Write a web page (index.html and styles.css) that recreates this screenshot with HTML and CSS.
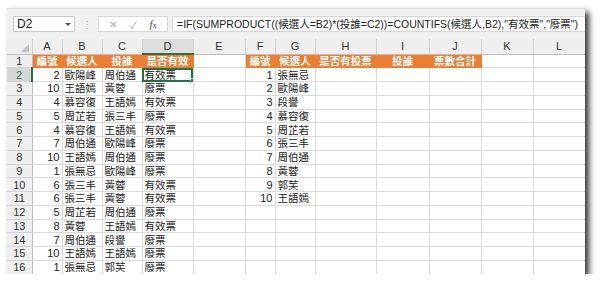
FILE: index.html
```html
<!DOCTYPE html>
<html lang="zh-Hant">
<head>
    <meta charset="UTF-8">
    <title>候選人投票</title>
    <link rel="stylesheet" href="styles.css">
</head>
<body>
    <div class="window">
        <div class="formula-bar">
            <div class="name-box">
                <span>D2</span>
                <span class="caret"></span>
            </div>
            <span class="dots">⋮</span>
            <div class="fx-buttons">
                <span class="btn">✕</span>
                <span class="btn">✓</span>
                <span class="btn fx"><i>f</i><sub>x</sub></span>
            </div>
            <div class="formula">=IF(SUMPRODUCT((候選人=B2)*(投誰=C2))=COUNTIFS(候選人,B2),"有效票","廢票")</div>
        </div>
        <table class="sheet">
            <colgroup>
                <col style="width:25px"><col style="width:30px"><col style="width:40px"><col style="width:40px">
                <col style="width:51px"><col style="width:52px"><col style="width:30px"><col style="width:40px">
                <col style="width:61px"><col style="width:53px"><col style="width:52px"><col style="width:52px">
                <col style="width:52px">
            </colgroup>
            <thead>
                <tr>
                    <th class="corner"><span class="tri"></span></th>
                    <th>A</th><th>B</th><th>C</th><th class="active-col">D</th><th>E</th><th>F</th>
                    <th>G</th><th>H</th><th>I</th><th>J</th><th>K</th><th>L</th>
                </tr>
            </thead>
            <tbody>
                <tr>
                    <th>1</th>
                    <td class="head">編號</td><td class="head">候選人</td><td class="head">投誰</td><td class="head">是否有效</td>
                    <td></td>
                    <td class="head">編號</td><td class="head">候選人</td><td class="head">是否有投票</td><td class="head">投誰</td><td class="head">票數合計</td>
                    <td></td><td></td>
                </tr>
                <tr>
                    <th class="active-row">2</th>
                    <td class="num">2</td><td>歐陽峰</td><td>周伯通</td><td class="selected">有效票</td><td></td>
                    <td class="num">1</td><td>張無忌</td><td></td><td></td><td></td><td></td><td></td>
                </tr>
                <tr>
                    <th>3</th>
                    <td class="num">10</td><td>王語嫣</td><td>黃蓉</td><td>廢票</td><td></td>
                    <td class="num">2</td><td>歐陽峰</td><td></td><td></td><td></td><td></td><td></td>
                </tr>
                <tr>
                    <th>4</th>
                    <td class="num">4</td><td>慕容復</td><td>王語嫣</td><td>有效票</td><td></td>
                    <td class="num">3</td><td>段譽</td><td></td><td></td><td></td><td></td><td></td>
                </tr>
                <tr>
                    <th>5</th>
                    <td class="num">5</td><td>周芷若</td><td>張三丰</td><td>廢票</td><td></td>
                    <td class="num">4</td><td>慕容復</td><td></td><td></td><td></td><td></td><td></td>
                </tr>
                <tr>
                    <th>6</th>
                    <td class="num">4</td><td>慕容復</td><td>王語嫣</td><td>有效票</td><td></td>
                    <td class="num">5</td><td>周芷若</td><td></td><td></td><td></td><td></td><td></td>
                </tr>
                <tr>
                    <th>7</th>
                    <td class="num">7</td><td>周伯通</td><td>歐陽峰</td><td>廢票</td><td></td>
                    <td class="num">6</td><td>張三丰</td><td></td><td></td><td></td><td></td><td></td>
                </tr>
                <tr>
                    <th>8</th>
                    <td class="num">10</td><td>王語嫣</td><td>周伯通</td><td>廢票</td><td></td>
                    <td class="num">7</td><td>周伯通</td><td></td><td></td><td></td><td></td><td></td>
                </tr>
                <tr>
                    <th>9</th>
                    <td class="num">1</td><td>張無忌</td><td>歐陽峰</td><td>廢票</td><td></td>
                    <td class="num">8</td><td>黃蓉</td><td></td><td></td><td></td><td></td><td></td>
                </tr>
                <tr>
                    <th>10</th>
                    <td class="num">6</td><td>張三丰</td><td>黃蓉</td><td>有效票</td><td></td>
                    <td class="num">9</td><td>郭芙</td><td></td><td></td><td></td><td></td><td></td>
                </tr>
                <tr>
                    <th>11</th>
                    <td class="num">6</td><td>張三丰</td><td>黃蓉</td><td>有效票</td><td></td>
                    <td class="num">10</td><td>王語嫣</td><td></td><td></td><td></td><td></td><td></td>
                </tr>
                <tr>
                    <th>12</th>
                    <td class="num">5</td><td>周芷若</td><td>周伯通</td><td>廢票</td><td></td>
                    <td></td><td></td><td></td><td></td><td></td><td></td><td></td>
                </tr>
                <tr>
                    <th>13</th>
                    <td class="num">8</td><td>黃蓉</td><td>王語嫣</td><td>有效票</td><td></td>
                    <td></td><td></td><td></td><td></td><td></td><td></td><td></td>
                </tr>
                <tr>
                    <th>14</th>
                    <td class="num">7</td><td>周伯通</td><td>段譽</td><td>廢票</td><td></td>
                    <td></td><td></td><td></td><td></td><td></td><td></td><td></td>
                </tr>
                <tr>
                    <th>15</th>
                    <td class="num">10</td><td>王語嫣</td><td>王語嫣</td><td>廢票</td><td></td>
                    <td></td><td></td><td></td><td></td><td></td><td></td><td></td>
                </tr>
                <tr>
                    <th>16</th>
                    <td class="num">1</td><td>張無忌</td><td>郭芙</td><td>廢票</td><td></td>
                    <td></td><td></td><td></td><td></td><td></td><td></td><td></td>
                </tr>
            </tbody>
        </table>
    </div>
</body>
</html>
```

FILE: styles.css
```css
body {
    margin: 0;
    background-color: #fff;
    font-family: "Liberation Sans", "Noto Sans CJK TC", sans-serif;
}
.window {
    margin: 8px 0 0 7px;
    width: 578px;
    height: 266px;
    overflow: hidden;
    background-color: #fff;
    box-shadow: 4px 4px 6px rgba(0, 0, 0, 0.8);
}
.formula-bar {
    display: flex;
    align-items: center;
    height: 31px;
    padding: 0 0 0 6px;
    box-sizing: border-box;
    background-color: #f1f1f1;
    border-top: 1px solid #dcdcdc;
}
.name-box {
    display: flex;
    align-items: center;
    justify-content: space-between;
    width: 62px;
    height: 16px;
    padding: 0 3px 0 3px;
    box-sizing: border-box;
    background-color: #fff;
    border: 1px solid #c8c8c8;
    font-size: 12px;
    color: #222;
}
.caret {
    width: 0;
    height: 0;
    border-left: 3px solid transparent;
    border-right: 3px solid transparent;
    border-top: 3px solid #555;
}
.dots {
    width: 23px;
    text-align: center;
    font-size: 10px;
    color: #aaa;
}
.fx-buttons {
    display: flex;
    align-items: center;
    justify-content: space-around;
    width: 70px;
    height: 16px;
    box-sizing: border-box;
    background-color: #fff;
    border: 1px solid #d6d6d6;
    padding: 0 4px;
}
.btn {
    font-size: 10px;
    color: #aaa;
}
.btn.fx {
    font-family: "Liberation Serif", serif;
    font-size: 11px;
    color: #444;
}
.btn.fx sub {
    font-size: 8px;
    vertical-align: 0;
}
.formula {
    flex: 1;
    height: 16px;
    margin-left: 4px;
    padding-left: 4px;
    box-sizing: border-box;
    background-color: #fff;
    border: 1px solid #d6d6d6;
    border-right: none;
    font-size: 10.5px;
    line-height: 15px;
    color: #222;
    white-space: nowrap;
    overflow: hidden;
}
.sheet {
    table-layout: fixed;
    width: 578px;
    border-collapse: collapse;
    font-size: 10.5px;
    color: #222;
}
.sheet thead th {
    height: 14px;
    padding: 0;
    background-color: #efefef;
    border-right: 1px solid #d2d2d2;
    border-bottom: 1px solid #bdbdbd;
    font-family: "Liberation Sans", sans-serif;
    font-size: 11px;
    font-weight: normal;
    color: #333;
    text-align: center;
}
.sheet thead th.corner {
    position: relative;
}
.tri {
    position: absolute;
    right: 3px;
    bottom: 2px;
    width: 0;
    height: 0;
    border-left: 8px solid transparent;
    border-bottom: 8px solid #c2c2c2;
}
.sheet thead th.active-col {
    background-color: #dedede;
    border-bottom: 2px solid #217346;
}
.sheet tbody tr {
    height: 13.75px;
}
.sheet tbody th {
    padding: 0;
    background-color: #efefef;
    border-right: 1px solid #bdbdbd;
    border-bottom: 1px solid #d2d2d2;
    font-family: "Liberation Sans", sans-serif;
    font-size: 11px;
    font-weight: normal;
    color: #333;
    text-align: center;
}
.sheet tbody th.active-row {
    background-color: #d6d6d6;
    border-right: 2px solid #217346;
    color: #217346;
}
.sheet td {
    padding: 0 2px;
    border-right: 1px solid #dadada;
    border-bottom: 1px solid #dadada;
    white-space: nowrap;
    overflow: hidden;
    line-height: 12px;
}
.sheet td.num {
    text-align: right;
    font-family: "Liberation Sans", sans-serif;
    font-size: 11px;
}
.sheet td.head {
    background-color: #ed7d31;
    border-color: #ed7d31;
    color: #fff;
    font-weight: bold;
    text-align: center;
}
.sheet td.selected {
    position: relative;
    outline: 2px solid #217346;
    outline-offset: -2px;
}
.sheet td.selected::after {
    content: "";
    position: absolute;
    right: -3px;
    bottom: -3px;
    width: 4px;
    height: 4px;
    background-color: #217346;
    border: 1px solid #fff;
}
```
